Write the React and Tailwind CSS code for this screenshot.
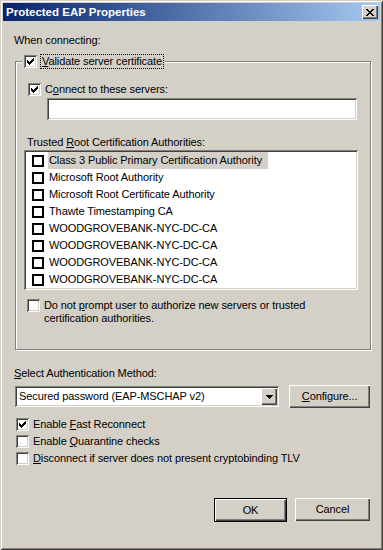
import React from 'react';

const font = "font-['Liberation_Sans',Arial,sans-serif]";

const Check = () => (
  <svg width="7" height="7" viewBox="0 0 7 7" shapeRendering="crispEdges" className="block">
    <path d="M0 2h1v1h1v1h1v-1h1v-1h1v-1h1v-1h1v3h-1v1h-1v1h-1v1h-1v1h-1v-1h-1v-1h-1z" fill="#000" />
  </svg>
);

// sunken 3d checkbox
const Box3D = ({ checked }) => (
  <div className="w-[13px] h-[13px] shrink-0 bg-white flex items-center justify-center shadow-[inset_1px_1px_#808080,inset_-1px_-1px_#ffffff,inset_2px_2px_#404040,inset_-2px_-2px_#d4d0c8]">
    {checked && <Check />}
  </div>
);

// flat checkbox used inside the list
const FlatBox = () => (
  <div className="w-[12px] h-[12px] shrink-0 border-2 border-black bg-white" />
);

const U = ({ children }) => <span className="underline underline-offset-[1px]">{children}</span>;

const Btn = ({ children, def, className = '' }) => (
  <div className={`${def ? 'border border-black' : ''} ${className}`}>
    <div className="h-full w-full flex items-center justify-center bg-[#d4d0c8] shadow-[inset_1px_1px_#ffffff,inset_-1px_-1px_#404040,inset_-2px_-2px_#808080]">
      {children}
    </div>
  </div>
);

const certs = [
  'Class 3 Public Primary Certification Authority',
  'Microsoft Root Authority',
  'Microsoft Root Certificate Authority',
  'Thawte Timestamping CA',
  'WOODGROVEBANK-NYC-DC-CA',
  'WOODGROVEBANK-NYC-DC-CA',
  'WOODGROVEBANK-NYC-DC-CA',
  'WOODGROVEBANK-NYC-DC-CA',
];

export default function App() {
  return (
    <div className={`w-[383px] h-[550px] bg-[#d4d0c8] p-[3px] flex flex-col text-[11px] leading-[13px] tracking-[-0.1px] text-black ${font} shadow-[inset_1px_1px_#d4d0c8,inset_-1px_-1px_#404040,inset_2px_2px_#ffffff,inset_-2px_-2px_#808080]`}>
      {/* title bar */}
      <div className="h-[18px] shrink-0 flex items-center justify-between pl-[3px] pr-[2px] bg-gradient-to-r from-[#0a246a] to-[#a6caf0]">
        <span className="text-white font-bold text-[11.5px] tracking-normal">Protected EAP Properties</span>
        <Btn className="w-[16px] h-[14px]">
          <svg width="8" height="7" viewBox="0 0 8 7" shapeRendering="crispEdges">
            <path d="M0 0h2v1h1v1h2v-1h1v-1h2v1h-1v1h-1v1h-1v1h1v1h1v1h1v1h-2v-1h-1v-1h-2v1h-1v1h-2v-1h1v-1h1v-1h1v-1h-1v-1h-1v-1h-1z" fill="#000" />
          </svg>
        </Btn>
      </div>

      <div className="flex flex-col pl-[11px] pr-[10px]">
        <div className="mt-[13px]">When connecting:</div>

        {/* group box */}
        <fieldset className="mt-[6px] ml-px w-[356px] h-[297px] border border-[#808080] shadow-[1px_1px_0_#ffffff,inset_1px_1px_0_#ffffff] px-0 pb-0">
          <legend className="ml-[6px] pl-[2px] pr-px bg-[#d4d0c8] flex items-center gap-[3px] h-[16px]">
            <Box3D checked />
            <span className="border border-dotted border-black px-px leading-[13px]"><U>V</U>alidate server certificate</span>
          </legend>

          <div className="flex flex-col pl-[8px]">
            <div className="mt-[14px] ml-[4px] flex items-center gap-[4px]">
              <Box3D checked />
              <span>C<U>o</U>nnect to these servers:</span>
            </div>
            <div className="mt-[2px] ml-[23px] w-[310px] h-[22px] bg-white shadow-[inset_1px_1px_#808080,inset_-1px_-1px_#ffffff,inset_2px_2px_#404040,inset_-2px_-2px_#d4d0c8]" />

            <div className="mt-[16px] ml-[3px]">Trusted <U>R</U>oot Certification Authorities:</div>
            <div className="mt-[1px] w-[334px] h-[140px] bg-white p-[2px] shadow-[inset_1px_1px_#808080,inset_-1px_-1px_#ffffff,inset_2px_2px_#404040,inset_-2px_-2px_#d4d0c8]">
              {certs.map((c, i) => (
                <div key={i} className="h-[17px] flex items-center pl-[6px]">
                  <FlatBox />
                  <span className={`ml-[4px] pl-px pr-[6px] h-[17px] flex items-center ${i === 0 ? 'bg-[#d4d0c8]' : ''}`}>{c}</span>
                </div>
              ))}
            </div>

            <div className="mt-[9px] ml-[3px] flex items-start gap-[4px]">
              <Box3D />
              <span>Do not <U>p</U>rompt user to authorize new servers or trusted<br />certification authorities.</span>
            </div>
          </div>
        </fieldset>

        <div className="mt-[17px]"><U>S</U>elect Authentication Method:</div>

        <div className="mt-[5px] flex items-center">
          <div className="ml-px w-[265px] h-[21px] bg-white flex items-center justify-between pl-[4px] pr-[2px] shadow-[inset_1px_1px_#808080,inset_-1px_-1px_#ffffff,inset_2px_2px_#404040,inset_-2px_-2px_#d4d0c8]">
            <span>Secured password (EAP-MSCHAP v2)</span>
            <Btn className="w-[16px] h-[17px]">
              <svg width="7" height="4" viewBox="0 0 7 4" shapeRendering="crispEdges">
                <path d="M0 0h7v1h-1v1h-1v1h-1v1h-1v-1h-1v-1h-1v-1h-1z" fill="#000" />
              </svg>
            </Btn>
          </div>
          <Btn className="ml-[10px] w-[81px] h-[23px]">
            <span><U>C</U>onfigure...</span>
          </Btn>
        </div>

        <div className="mt-[10px] ml-[2px] flex flex-col gap-[4px]">
          <div className="flex items-center gap-[4px]">
            <Box3D checked />
            <span>Enable <U>F</U>ast Reconnect</span>
          </div>
          <div className="flex items-center gap-[4px]">
            <Box3D />
            <span>Enable <U>Q</U>uarantine checks</span>
          </div>
          <div className="flex items-center gap-[4px]">
            <Box3D />
            <span><U>D</U>isconnect if server does not present cryptobinding TLV</span>
          </div>
        </div>

        <div className="mt-[33px] flex justify-end gap-[8px]">
          <Btn def className="w-[73px] h-[24px]">OK</Btn>
          <Btn className="w-[75px] h-[23px]">Cancel</Btn>
        </div>
      </div>
    </div>
  );
}
